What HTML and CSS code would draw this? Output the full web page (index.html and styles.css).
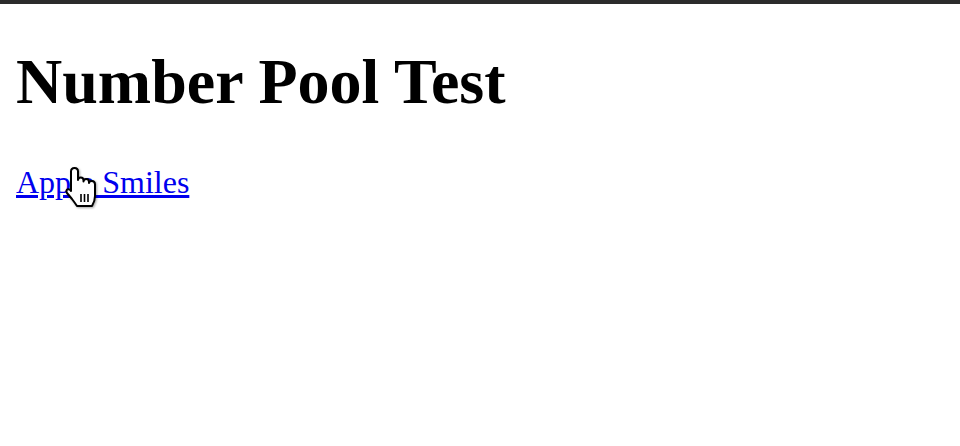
FILE: index.html
```html
<!DOCTYPE html>
<html>
<head>
<meta charset="utf-8">
<link rel="stylesheet" href="styles.css">
</head>
<body>
<div class="topbar"></div>
<main class="page">
  <h1 class="title">Number Pool Test</h1>
  <a class="link" href="#">Apple Smiles</a>
</main>
<svg class="cursor" width="36" height="44" viewBox="0 0 36 44">
  <path d="M7 24 L7 5.5 Q7 2 10.5 2 Q14 2 14 5.5 L14 14 Q14 11.5 16.75 11.5 Q19.5 11.5 19.5 14.5 L19.5 15.5 Q19.5 13 22.25 13 Q25 13 25 16 L25 17 Q25 15 28 15 Q31 15 31 18.5 L31 30 Q31 35 28 40 L13 40 Q11 37 8 33 L3 27 Q1.5 24 4 23.3 Q5.8 23 7 25 Z" fill="#fff" stroke="#000" stroke-width="2" stroke-linejoin="round"/>
  <path d="M17 28 L17 36 M20.5 28 L20.5 36 M24 28 L24 36" stroke="#000" stroke-width="1.6"/>
</svg>
</body>
</html>
```
FILE: styles.css
```css
html, body {
  margin: 0;
  padding: 0;
  background: #fff;
}
.topbar {
  height: 4px;
  background: #2b2b2b;
}
.page {
  padding: 0 16px;
  font-family: "Liberation Serif", "Times New Roman", serif;
}
.title {
  margin: 0;
  padding-top: 43px;
  font-size: 64px;
  font-weight: bold;
  line-height: 1.107;
  color: #000;
}
.link {
  display: inline-block;
  margin-top: 46px;
  font-size: 32px;
  color: #0000ee;
  text-decoration: underline;
}
.cursor {
  position: absolute;
  left: 64px;
  top: 166px;
  filter: drop-shadow(1px 1px 1px rgba(0, 0, 0, 0.35));
}
```
